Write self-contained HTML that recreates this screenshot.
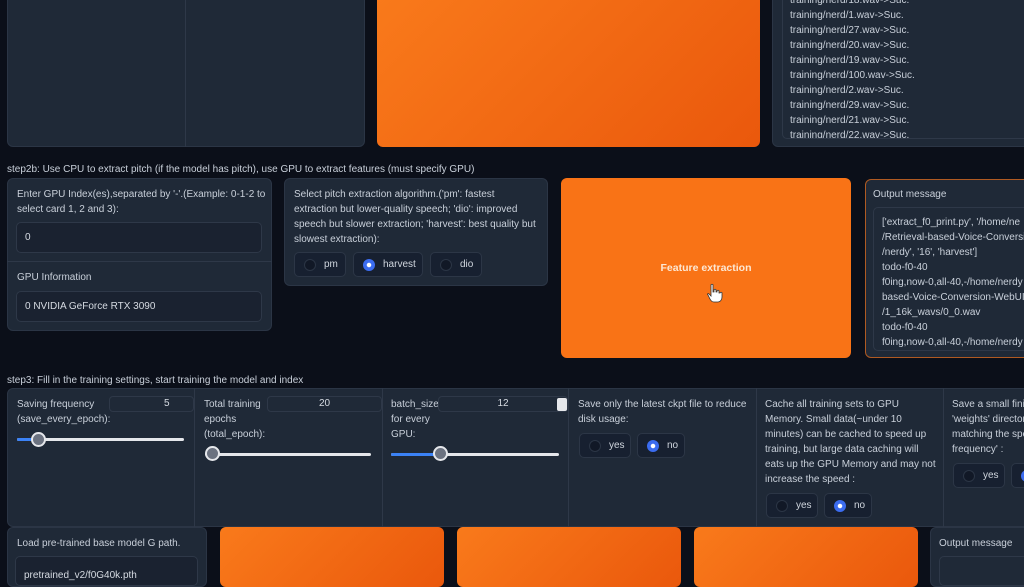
<!DOCTYPE html>
<html><head><meta charset="utf-8"><style>
*{box-sizing:border-box;margin:0;padding:0}
body{width:1024px;height:576px;overflow:hidden;background:#0b0f19;font-family:"Liberation Sans",sans-serif;color:#cbd2dc;font-size:10px;position:relative}
.a{position:absolute}
.p{position:absolute;background:#1f2937;border:1px solid #2b3545;border-radius:6px}
.o{position:absolute;background:linear-gradient(135deg,#f97a1b,#ea580c);border-radius:6px}
.in{position:absolute;background:#1a2230;border:1px solid #2e3848;border-radius:5px;color:#d6dbe2;padding-left:8px;display:flex;align-items:center}
.t{position:absolute;line-height:15px;color:#c9d0da}
.r{position:absolute;height:25px;background:#172030;border:1px solid #2c3646;border-radius:5px;display:flex;align-items:center;padding-left:9px;gap:8px;color:#d0d6de}
.c{width:12px;height:12px;border-radius:50%;background:#111826;border:1px solid #2b3545}
.c.on{background:radial-gradient(circle,#fff 0 2px,#3b6cf0 2.5px);border:none}
.sl{position:absolute;height:3px;background:#e5e7eb;border-radius:2px}
.sf{position:absolute;height:3px;background:#3b82f6;border-radius:2px}
.th{position:absolute;width:15px;height:15px;border-radius:50%;background:#6b7280;border:2px solid #e5e7eb}
.num{position:absolute;height:16px;border:1px solid #2e3848;border-radius:4px;background:#1f2937;text-align:center;line-height:14px;color:#d6dbe2}
.vd{position:absolute;width:1px;background:#2e3848}
</style></head><body>
<div class="p" style="left:7px;top:-6px;width:358px;height:153px"></div>
<div class="vd" style="left:185px;top:0;height:147px"></div>
<div class="o" style="left:377px;top:-6px;width:383px;height:153px"></div>
<div class="p" style="left:772px;top:-6px;width:260px;height:153px"></div>
<div class="a" style="left:782px;top:-6px;width:250px;height:145px;border:1px solid #2e3848;border-radius:5px;overflow:hidden">
<div class="t" style="left:7px;top:-2px;font-size:10px;white-space:nowrap">training/nerd/18.wav-&gt;Suc.<br>training/nerd/1.wav-&gt;Suc.<br>training/nerd/27.wav-&gt;Suc.<br>training/nerd/20.wav-&gt;Suc.<br>training/nerd/19.wav-&gt;Suc.<br>training/nerd/100.wav-&gt;Suc.<br>training/nerd/2.wav-&gt;Suc.<br>training/nerd/29.wav-&gt;Suc.<br>training/nerd/21.wav-&gt;Suc.<br>training/nerd/22.wav-&gt;Suc.</div></div>

<div class="t" style="left:7px;top:162px">step2b: Use CPU to extract pitch (if the model has pitch), use GPU to extract features (must specify GPU)</div>
<div class="p" style="left:7px;top:178px;width:265px;height:153px"></div>
<div class="t" style="left:17px;top:187px">Enter GPU Index(es),separated by '-'.(Example: 0-1-2 to<br>select card 1, 2 and 3):</div>
<div class="in" style="left:16px;top:222px;width:246px;height:31px">0</div>
<div class="a" style="left:7px;top:261px;width:265px;height:1px;background:#2e3848"></div>
<div class="t" style="left:17px;top:270px">GPU Information</div>
<div class="in" style="left:16px;top:291px;width:246px;height:31px">0 NVIDIA GeForce RTX 3090</div>

<div class="p" style="left:284px;top:178px;width:264px;height:108px"></div>
<div class="t" style="left:294px;top:187px">Select pitch extraction algorithm.('pm': fastest<br>extraction but lower-quality speech; 'dio': improved<br>speech but slower extraction; 'harvest': best quality but<br>slowest extraction):</div>
<div class="r" style="left:294px;top:252px;width:52px"><span class="c"></span>pm</div>
<div class="r" style="left:353px;top:252px;width:70px"><span class="c on"></span>harvest</div>
<div class="r" style="left:430px;top:252px;width:52px"><span class="c"></span>dio</div>

<div class="o" style="left:561px;top:178px;width:290px;height:180px;background:#f97316"></div>
<div class="a" style="left:561px;top:262px;width:290px;text-align:center;color:#fde8d4;font-weight:bold;font-size:10.5px">Feature extraction</div>
<svg class="a" style="left:706px;top:283px" width="18" height="20" viewBox="0 0 18 20"><path d="M5 2c0-1 2-1 2 0v7h1V7c0-1 2-1 2 0v2h1V8c0-1 2-1 2 0v2h1c0-1 2-1 2 0v4c0 3-2 5-4 5H8c-2 0-3-1-4-3L2 12c-1-1 0-2 1-1l2 2z" fill="#fff" stroke="#333" stroke-width="0.8"/></svg>

<div class="p" style="left:865px;top:179px;width:170px;height:179px;border:1.5px solid #b05a22"></div>
<div class="t" style="left:873px;top:187px">Output message</div>
<div class="a" style="left:873px;top:207px;width:160px;height:144px;border:1px solid #2e3848;border-radius:5px"></div>
<div class="t" style="left:882px;top:215px;white-space:nowrap">['extract_f0_print.py', '/home/ne<br>/Retrieval-based-Voice-Conversi<br>/nerdy', '16', 'harvest']<br>todo-f0-40<br>f0ing,now-0,all-40,-/home/nerdy<br>based-Voice-Conversion-WebUI/<br>/1_16k_wavs/0_0.wav<br>todo-f0-40<br>f0ing,now-0,all-40,-/home/nerdy</div>

<div class="t" style="left:7px;top:373px">step3: Fill in the training settings, start training the model and index</div>
<div class="p" style="left:7px;top:388px;width:1030px;height:139px"></div>
<div class="vd" style="left:194px;top:388px;height:139px"></div>
<div class="vd" style="left:382px;top:388px;height:139px"></div>
<div class="vd" style="left:568px;top:388px;height:139px"></div>
<div class="vd" style="left:756px;top:388px;height:139px"></div>
<div class="vd" style="left:943px;top:388px;height:139px"></div>

<div class="t" style="left:17px;top:397px">Saving frequency<br>(save_every_epoch):</div>
<div class="num" style="left:109px;top:396px;width:85px">&nbsp;&nbsp;&nbsp;&nbsp;&nbsp;&nbsp;&nbsp;&nbsp;&nbsp;&nbsp;&nbsp;5</div>
<div class="sl" style="left:17px;top:438px;width:167px"></div><div class="sf" style="left:17px;top:438px;width:20px"></div>
<div class="th" style="left:31px;top:432px"></div>

<div class="t" style="left:204px;top:397px">Total training<br>epochs<br>(total_epoch):</div>
<div class="num" style="left:267px;top:396px;width:115px">20</div>
<div class="sl" style="left:205px;top:453px;width:166px"></div>
<div class="th" style="left:205px;top:446px"></div>

<div class="t" style="left:391px;top:397px">batch_size<br>for every<br>GPU:</div>
<div class="num" style="left:438px;top:396px;width:130px">12</div>
<div class="a" style="left:557px;top:398px;width:10px;height:13px;background:#e5e7eb;border-radius:2px"></div>
<div class="sl" style="left:391px;top:453px;width:168px"></div><div class="sf" style="left:391px;top:453px;width:45px"></div>
<div class="th" style="left:433px;top:446px"></div>

<div class="t" style="left:578px;top:397px">Save only the latest ckpt file to reduce<br>disk usage:</div>
<div class="r" style="left:579px;top:433px;width:52px"><span class="c"></span>yes</div>
<div class="r" style="left:637px;top:433px;width:48px"><span class="c on"></span>no</div>

<div class="t" style="left:765px;top:397px">Cache all training sets to GPU<br>Memory. Small data(~under 10<br>minutes) can be cached to speed up<br>training, but large data caching will<br>eats up the GPU Memory and may not<br>increase the speed :</div>
<div class="r" style="left:766px;top:493px;width:52px"><span class="c"></span>yes</div>
<div class="r" style="left:824px;top:493px;width:48px"><span class="c on"></span>no</div>

<div class="t" style="left:952px;top:397px;white-space:nowrap">Save a small finished<br>'weights' directory<br>matching the specified<br>frequency' :</div>
<div class="r" style="left:953px;top:463px;width:52px"><span class="c"></span>yes</div>
<div class="r" style="left:1011px;top:463px;width:48px"><span class="c on"></span>no</div>

<div class="p" style="left:7px;top:527px;width:200px;height:60px"></div>
<div class="t" style="left:17px;top:536px">Load pre-trained base model G path.</div>
<div class="in" style="left:15px;top:556px;width:183px;height:30px;padding-top:8px">pretrained_v2/f0G40k.pth</div>
<div class="o" style="left:220px;top:527px;width:224px;height:60px"></div>
<div class="o" style="left:457px;top:527px;width:224px;height:60px"></div>
<div class="o" style="left:694px;top:527px;width:224px;height:60px"></div>
<div class="p" style="left:930px;top:527px;width:110px;height:60px"></div>
<div class="t" style="left:939px;top:536px">Output message</div>
<div class="a" style="left:939px;top:556px;width:95px;height:30px;border:1px solid #2e3848;border-radius:5px"></div>
</body></html>
